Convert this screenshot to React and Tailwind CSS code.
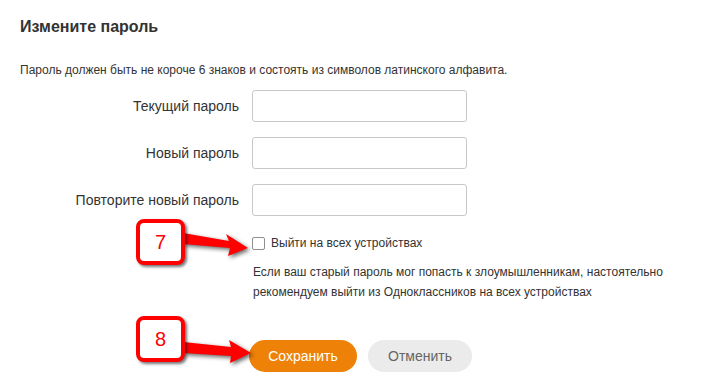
import React from 'react';

const fields = ['Текущий пароль', 'Новый пароль', 'Повторите новый пароль'];

function Callout({ n, top }) {
  return (
    <div
      className="absolute left-[136px] w-[49px] h-[46px] bg-white border-[4px] border-[#ff0000] rounded-[8px] flex items-center justify-center text-[#ff0000] text-[20px] shadow-[2px_2px_3px_rgba(0,0,0,0.55)]"
      style={{ top }}
    >
      {n}
    </div>
  );
}

export default function App() {
  return (
    <div className="relative w-[715px] h-[388px] bg-white text-[#333] font-['Liberation_Sans',Arial,sans-serif] overflow-hidden">
      <div className="flex flex-col pt-[17px] px-[20px]">
        <h1 className="text-[16px] leading-[20px] font-bold text-[#333]">Измените пароль</h1>
        <p className="mt-[25px] text-[12px] leading-[16px]">
          Пароль должен быть не короче 6 знаков и состоять из символов латинского алфавита.
        </p>

        {/* Form rows */}
        <div className="mt-[12px] grid grid-cols-[219px_215px] gap-x-[13px] gap-y-[15px] items-center">
          {fields.map((f) => (
            <React.Fragment key={f}>
              <label className="text-right text-[14px] leading-[16px] text-[#333]">{f}</label>
              <input
                type="password"
                className="h-[32px] w-[215px] border border-[#c8c8c8] rounded-[3px] bg-white outline-none"
              />
            </React.Fragment>
          ))}
        </div>

        <div className="ml-[232px] mt-[19px] flex items-center gap-[6px] text-[12px] leading-[16px]">
          <span className="w-[13px] h-[13px] border border-[#8f8f8f] rounded-[2px] bg-white" />
          <span>Выйти на всех устройствах</span>
        </div>

        <p className="ml-[233px] mt-[11px] text-[12px] leading-[20px]">
          Если ваш старый пароль мог попасть к злоумышленникам, настоятельно
          <br />
          рекомендуем выйти из Одноклассников на всех устройствах
        </p>

        <div className="ml-[229px] mt-[38px] flex gap-[11px]">
          <button className="h-[32px] w-[108px] rounded-full bg-[#ee8208] text-white text-[14px]">
            Сохранить
          </button>
          <button className="h-[32px] w-[104px] rounded-full bg-[#ebebeb] text-[#666] text-[14px]">
            Отменить
          </button>
        </div>
      </div>

      {/* Annotation overlay */}
      <svg className="absolute left-0 top-0 drop-shadow-[2px_2px_2px_rgba(0,0,0,0.6)]" width="715" height="388">
        <polygon
          fill="#ff0000"
          points="183,233 229,241 226,234 248,248 228,256 230,248 183,244"
        />
        <polygon
          fill="#ff0000"
          points="183,342 231,347 229,340 251,353 230,363 231,356 183,353"
        />
      </svg>
      <Callout n="7" top={219} />
      <Callout n="8" top={316} />
    </div>
  );
}
